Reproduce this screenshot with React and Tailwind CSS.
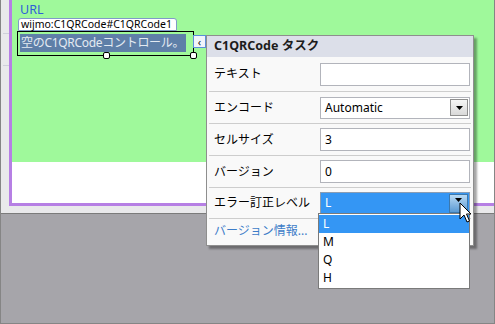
import React from "react";

const font = "font-[family-name:Noto_Sans,Noto_Sans_CJK_JP,sans-serif]";

function Arrow({ color = "#000" }) {
  return (
    <svg width="7" height="4" viewBox="0 0 7 4">
      <path d="M0 0 L7 0 L3.5 4 Z" fill={color} />
    </svg>
  );
}

function TextBox({ value }) {
  return (
    <div className="w-[150px] h-[23px] bg-white border border-[#b2b4bb] flex items-center px-[4px] text-[12px] text-black leading-none">
      {value}
    </div>
  );
}

function SelectBox({ value, active }) {
  return (
    <div
      className={
        "w-[150px] h-[22px] border flex items-center pl-[4px] pr-[1px] text-[12px] leading-none " +
        (active ? "bg-[#3496f4] border-[#8a9db3] text-white" : "bg-white border-[#b2b4bb] text-black")
      }
    >
      <span className="flex-1">{value}</span>
      {active ? (
        <div className="w-[19px] h-[19px] border border-[#3b78ad] bg-gradient-to-b from-[#b9daf4] to-[#5a9ad3] flex justify-center pt-[3px]">
          <Arrow />
        </div>
      ) : (
        <div className="w-[18px] h-[17px] border border-[#8f8f8f] bg-gradient-to-b from-[#f6f6f6] to-[#d9d9d9] flex items-center justify-center">
          <Arrow />
        </div>
      )}
    </div>
  );
}

function Row({ label, h, children }) {
  return (
    <div className={"flex items-center mx-[2px] border-b border-[#cdcdcd] " + h}>
      <div className="w-[111px] pl-[5px] text-[12px] text-black leading-none">{label}</div>
      {children}
    </div>
  );
}

export default function App() {
  return (
    <div className={"relative w-[495px] h-[324px] overflow-hidden bg-[#a6a5aa] border-x border-b border-[#858585] " + font}>
      {/* designer surface */}
      <div className="flex h-[214px] bg-[#e9e9eb] border-b border-[#7b7b7b]">
        <div className="w-[8px] flex flex-col gap-[31px] pt-[33px]">
          <div className="h-px w-[6px] ml-[2px] bg-[#cfd0da]" />
          <div className="h-px w-[6px] ml-[2px] bg-[#cfd0da]" />
        </div>
        <div className="flex-1 h-[206px] flex flex-col border-l-[3px] border-b-[3px] border-[#b67fe4]">
          <div className="h-[162px] bg-[#9ff99b] pl-[6px] pt-[2px]">
            <div className="ml-[2px] h-[16px] text-[12.5px] leading-[16px] text-[#2e5fd8]">URL</div>
            <div className="w-[159px] h-[13px] bg-white border border-[#7f9bc8] rounded-t-[3px] px-[2px] text-[10.5px] leading-[11px] text-black whitespace-nowrap">
              wijmo:C1QRCode#C1QRCode1
            </div>
            <div className="relative -ml-[1px] w-[177px] h-[25px] border border-black p-[2px]">
              <div className="w-[166px] h-[18px] bg-[#5e7fa8] text-[#e3eaf2] text-[12px] tracking-[-0.3px] leading-[18px] pl-[1px] whitespace-nowrap overflow-hidden">
                空のC1QRCodeコントロール。
              </div>
              <div className="absolute left-[85px] top-[20px] w-[7px] h-[7px] bg-white border border-black rounded-[2px]" />
              <div className="absolute left-[172px] top-[20px] w-[7px] h-[7px] bg-white border border-black rounded-[2px]" />
            </div>
          </div>
          <div className="flex-1 bg-white" />
        </div>
      </div>

      {/* smart tag glyph */}
      <div className="absolute left-[192px] top-[35px] w-[13px] h-[13px] bg-[#f1f4fb] border border-[#5b8fd8] flex items-center justify-center text-[11px] leading-none text-[#222]">
        ‹
      </div>

      {/* task panel */}
      <div className="absolute left-[205px] top-[35px] w-[268px] h-[211px] bg-[#f9f9f9] border border-[#8e8e8e] shadow-[3px_3px_2px_rgba(0,0,0,0.35)] flex flex-col">
        <div className="h-[21px] bg-[#dcdfe9] flex items-center pl-[7px] text-[12.5px] font-bold text-[#1c1c1c] leading-none">
          C1QRCode タスク
        </div>
        <Row label="テキスト" h="h-[35px]">
          <TextBox value="" />
        </Row>
        <Row label="エンコード" h="h-[32px]">
          <SelectBox value="Automatic" />
        </Row>
        <Row label="セルサイズ" h="h-[32px]">
          <TextBox value="3" />
        </Row>
        <Row label="バージョン" h="h-[32px]">
          <TextBox value="0" />
        </Row>
        <Row label="エラー訂正レベル" h="h-[31px]">
          <SelectBox value="L" active />
        </Row>
        <div className="flex-1 flex items-center pl-[7px] pb-[2px] text-[12px] text-[#3d7cc8] leading-none">
          バージョン情報...
        </div>
      </div>

      {/* open dropdown list */}
      <div className="absolute left-[317px] top-[213px] w-[152px] h-[76px] bg-white border border-[#7a7a7a] flex flex-col pt-px text-[12px] leading-none">
        {["L", "M", "Q", "H"].map((v, i) => (
          <div
            key={v}
            className={"h-[18px] flex items-center pl-[4px] " + (i === 0 ? "bg-[#3496f4] text-white" : "text-black")}
          >
            {v}
          </div>
        ))}
      </div>

      {/* mouse cursor */}
      <svg className="absolute left-[458px] top-[202px]" width="13" height="21" viewBox="0 0 13 21">
        <path d="M1 1 L1 17 L5 13 L8 20 L10.5 19 L7.5 12 L12 12 Z" fill="#fff" stroke="#000" strokeWidth="1" strokeLinejoin="round" />
      </svg>
    </div>
  );
}
